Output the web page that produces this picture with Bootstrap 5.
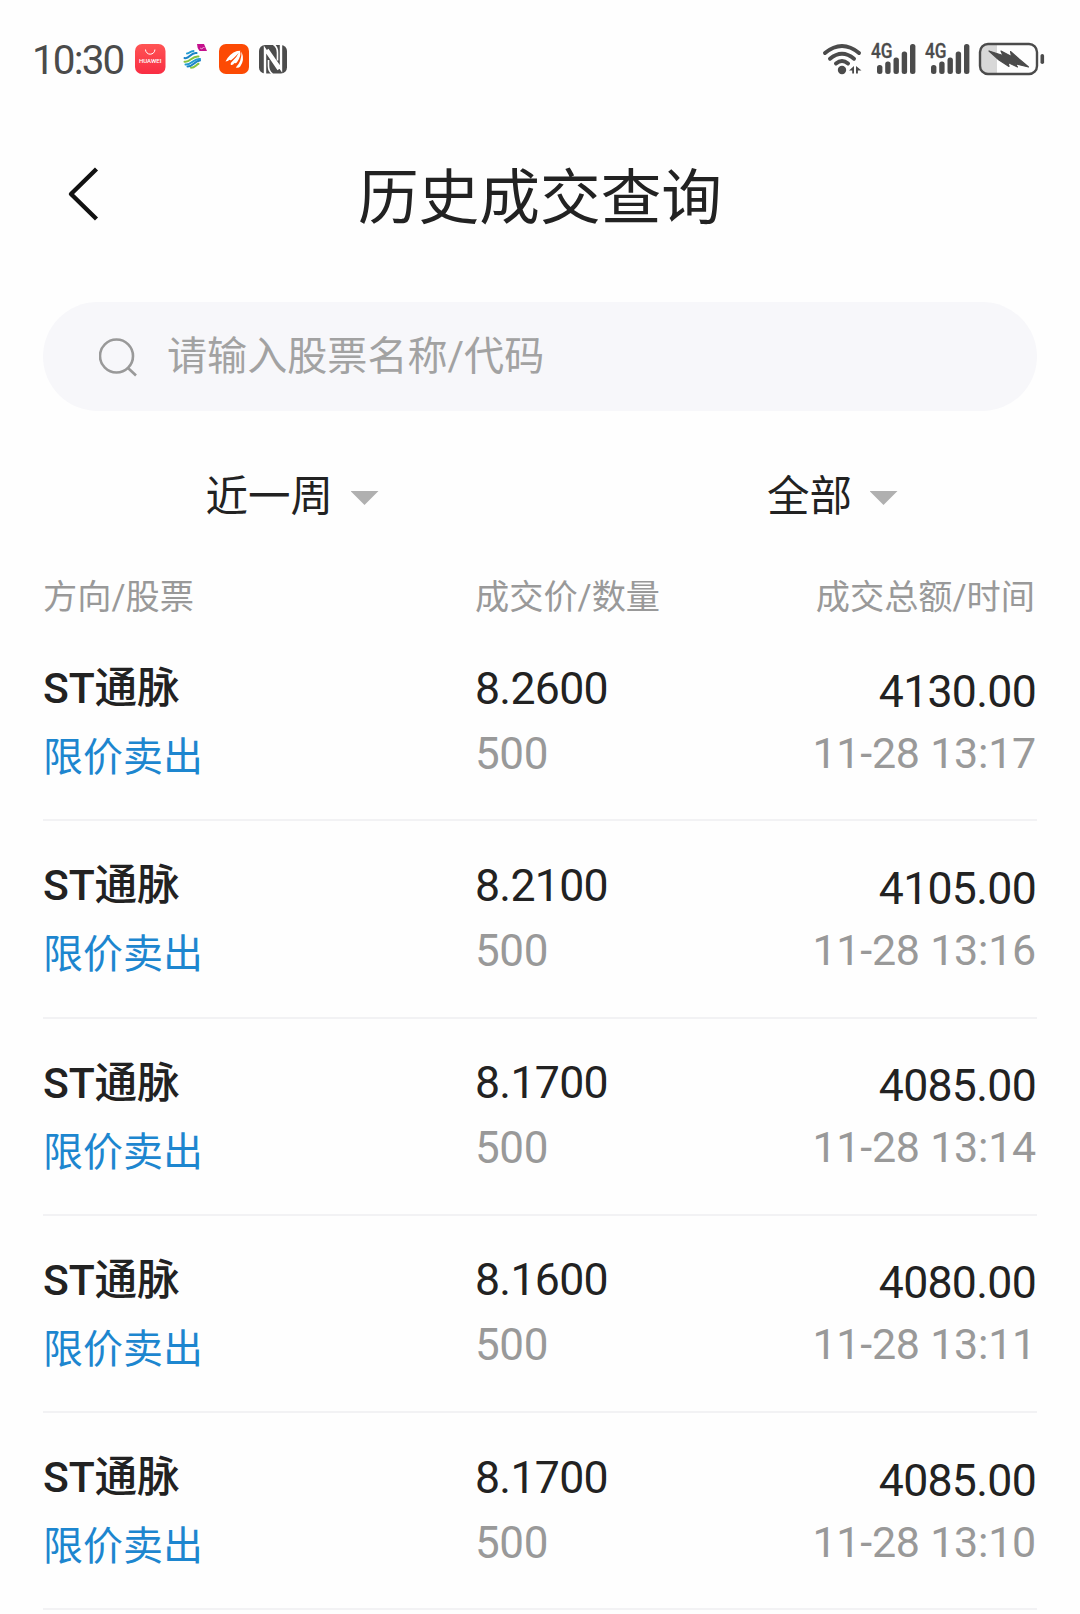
<!DOCTYPE html>
<html lang="zh-CN">
<head>
<meta charset="utf-8">
<meta name="viewport" content="width=device-width, initial-scale=1">
<title>历史成交查询</title>
<link href="https://cdn.jsdelivr.net/npm/bootstrap@5.3.0/dist/css/bootstrap.min.css" rel="stylesheet">
<style>
body{font-family:Roboto,"Noto Sans CJK SC",sans-serif;color:#222;background:#fefefe;width:1080px;height:1614px;overflow:hidden}
svg{display:block;flex:none}
.status-bar{height:118px;color:#4b4b4b;padding:0 33px 0 32px}
.clock{font-size:40.5px;line-height:60px;letter-spacing:-1.9px;width:99.5px;padding-top:2px}
.title-bar{height:152px;padding:0 43px}
.title-text{font-size:60.7px;line-height:90px;padding-bottom:3px;font-family:"Noto Sans CJK SC",sans-serif}
.side-slot{width:84px}
.search-box{height:109px;margin:32px 43px 0;background:#f7f7fa;padding-left:56px}
.search-box input{background:none;border:0;outline:0;padding:2px 0 0;margin-left:28px;font-size:40.1px;width:700px;color:#a2a2a2}
.search-box input::placeholder{color:#a2a2a2;opacity:1}
.filters{height:162px;padding:54px 43px 0}
.filter-btn{font-size:42.5px;line-height:64px;color:#222;gap:17.5px}
.filter-left{width:499px;padding-left:162.5px}
.filter-right{padding-left:225px}
.caret-down{width:28px;height:14px;margin-top:2px;background:#b0b0b0;clip-path:polygon(0 0,100% 0,50% 100%)}
.list-wrap{padding:0 43px}
.heads{font-size:34.2px;line-height:48px;color:#999;height:51px}
.heads .c3{padding-right:1px}
.c1,.c2,.c3{flex:none}
.c1{width:432px}.c2{width:270px}.c3{width:291px;text-align:right}
.trade{height:197.3px;border-bottom:2px solid #f2f2f4}
.trade .c1{padding-top:32px}
.trade .c2{padding-top:32.5px}
.trade .c3{padding-top:35.5px}
.stock{font-size:42.7px;line-height:64px;font-weight:500;letter-spacing:-.2px}
.side{font-size:40px;line-height:60px;color:#1d86cf;padding-top:8px}
.num{font-size:44.6px;line-height:64px;letter-spacing:-.7px}
.sub{color:#999;font-size:44px;line-height:60px;letter-spacing:-.4px;padding-top:3px}
.date{font-size:43px;letter-spacing:-.25px;padding-top:0;margin-top:-1px}
</style>
</head>
<body>
<header class="status-bar d-flex justify-content-between align-items-center">
  <div class="d-flex align-items-center">
    <span class="clock">10:30</span>
    <svg width="160" height="46" viewBox="132 36 160 46">
      <defs><linearGradient id="store" x1="0" y1="0" x2="0" y2="1"><stop offset="0" stop-color="#ff5454"/><stop offset="1" stop-color="#f92d43"/></linearGradient></defs>
      <rect x="135" y="44" width="30.500" height="30" rx="7" fill="url(#store)"/>
      <path d="M145.500 49.500a4.700 4.700 0 0 0 9.400 0" fill="none" stroke="#fff" stroke-width="1"/>
      <text x="150.200" y="63" font-size="5.600" font-weight="500" textLength="22.500" lengthAdjust="spacingAndGlyphs" text-anchor="middle" fill="#fff">HUAWEI</text>
      <g fill="none" stroke-width="2" stroke-linecap="round">
        <path d="M184.500 58c5 1.500 6-6 12-5M187.500 66.500c6 0 7-6 12.500-6" stroke="#1b83c6"/>
        <path d="M184.500 61.700c6 1 7-6 14-5.200M191 67.800c4 0 5-3 7.500-4" stroke="#84c341"/>
        <path d="M187 53.500c3 0 3-2.500 6.500-2.500M185.500 64.500c7 .5 8-6.500 14.500-5.500" stroke="#239bd0"/>
      </g>
      <path d="M197 44h7l3 7h-7.500q-2.500-3-2.500-7z" fill="#c4108c"/>
      <path d="M200 48l2 1 1.500-2 1 1" stroke="#f3b6de" fill="none" stroke-width=".8"/>
      <rect x="219" y="44" width="30" height="30" rx="7" fill="#fc4a04"/>
      <path d="M225.500 61.500q4-8 11.500-10.500l3.500-.3q-5 6-8.500 8.800-1 1.300-2.500.2-1.500 1.500-4 1.800zM231 65q-1-1 .2-2.600 6-5.500 8.800-11.700 1.500 5.500-3 11.500-1.200 1.700-2.600.9-1.200 2.200-3.400 1.900zM235.800 67.500q6-6 5.700-16 3.500 8.500-1.300 15-1.700 2-4.400 1z" fill="#fff"/>
      <rect x="259" y="45" width="28" height="28.500" rx="6" fill="#4c4c4c"/>
      <path d="M265 74V49.500l13.500 20M281 44.500V69L267.500 49.500" fill="none" stroke="#fefefe" stroke-width="2.400"/>
      <path d="M273.500 44.500q4 2.500 4 8v8M268.500 60v6q0 5.500 4 8" fill="none" stroke="#fefefe" stroke-width="1.600"/>
    </svg>
  </div>
  <svg width="230" height="46" viewBox="818 36 230 46" fill="#4b4b4b">
    <g fill="none" stroke="#4b4b4b" stroke-width="4" stroke-linecap="round"><path d="M826 53q17-14 34 0M831 58.700q12-10 24 0M837 63.500q6-5 12 0"/></g>
    <circle cx="843" cy="70" r="4.200"/>
    <path d="M850 70.500l5-4.500v7.500h-1.800v-3zM857 66l5.500 4.500h-3.600v3H857z"/>
    <g id="signal">
      <text x="872" y="58" font-size="19.500" font-weight="500" stroke="#4b4b4b" stroke-width=".3" textLength="21.500" lengthAdjust="spacingAndGlyphs">4G</text>
      <rect x="878" y="65" width="5.400" height="9" rx="2.500"/><rect x="886.200" y="61.500" width="5.400" height="12.500" rx="2.500"/><rect x="894.500" y="57.500" width="5.400" height="16.500" rx="2.500"/><rect x="902.700" y="51.500" width="5.400" height="22.500" rx="2.500"/><rect x="911" y="44" width="5.400" height="30" rx="2.500"/>
    </g>
    <use href="#signal" x="54"/>
    <path d="M998 44v30h-9q-8 0-8-8V52q0-8 8-8z" fill="#d8d8d8"/>
    <rect x="981" y="44" width="57" height="30" rx="8" fill="none" stroke="#4b4b4b" stroke-width="2.400"/>
    <rect x="1041.500" y="54" width="3.600" height="10" rx="1.800"/>
    <path d="M990 51l14 4.500-2-4.500 10.500 5.500-1-5 8.500 7.500 9.500 8-14-3.500 3 3.500-9.500-4.500 1 4-10-6.500z" stroke="#4b4b4b" stroke-width="1.200" stroke-linejoin="round"/>
  </svg>
</header>
<nav class="title-bar d-flex justify-content-between align-items-center">
  <div class="side-slot"><svg width="84" height="60" viewBox="43 164 84 60"><path d="M96.500 169L71 194L96.500 219" fill="none" stroke="#111" stroke-width="4.400" stroke-linejoin="round"/></svg></div>
  <div class="title-text">历史成交查询</div>
  <div class="side-slot"></div>
</nav>
<div class="search-box rounded-pill d-flex align-items-center">
  <svg width="40" height="40" viewBox="0 0 40 40" fill="none" stroke="#999" stroke-width="2.600"><circle cx="17.500" cy="19" r="16.500"/><path d="M28.500 30.500l8.500 8"/></svg>
  <input type="text" placeholder="请输入股票名称/代码">
</div>
<div class="filters d-flex">
  <div class="filter-left"><div class="filter-btn d-flex align-items-center"><span>近一周</span><span class="caret-down"></span></div></div>
  <div class="filter-right"><div class="filter-btn d-flex align-items-center"><span>全部</span><span class="caret-down"></span></div></div>
</div>
<main class="list-wrap">
  <div class="heads d-flex"><div class="c1">方向/股票</div><div class="c2">成交价/数量</div><div class="c3">成交总额/时间</div></div>
  <div class="trade d-flex"><div class="c1"><div class="stock">ST通脉</div><div class="side">限价卖出</div></div><div class="c2"><div class="num">8.2600</div><div class="sub">500</div></div><div class="c3"><div class="num">4130.00</div><div class="sub date">11-28 13:17</div></div></div>
  <div class="trade d-flex"><div class="c1"><div class="stock">ST通脉</div><div class="side">限价卖出</div></div><div class="c2"><div class="num">8.2100</div><div class="sub">500</div></div><div class="c3"><div class="num">4105.00</div><div class="sub date">11-28 13:16</div></div></div>
  <div class="trade d-flex"><div class="c1"><div class="stock">ST通脉</div><div class="side">限价卖出</div></div><div class="c2"><div class="num">8.1700</div><div class="sub">500</div></div><div class="c3"><div class="num">4085.00</div><div class="sub date">11-28 13:14</div></div></div>
  <div class="trade d-flex"><div class="c1"><div class="stock">ST通脉</div><div class="side">限价卖出</div></div><div class="c2"><div class="num">8.1600</div><div class="sub">500</div></div><div class="c3"><div class="num">4080.00</div><div class="sub date">11-28 13:11</div></div></div>
  <div class="trade d-flex"><div class="c1"><div class="stock">ST通脉</div><div class="side">限价卖出</div></div><div class="c2"><div class="num">8.1700</div><div class="sub">500</div></div><div class="c3"><div class="num">4085.00</div><div class="sub date">11-28 13:10</div></div></div>
</main>
<script src="https://cdn.jsdelivr.net/npm/bootstrap@5.3.0/dist/js/bootstrap.bundle.min.js"></script>
</body>
</html>
